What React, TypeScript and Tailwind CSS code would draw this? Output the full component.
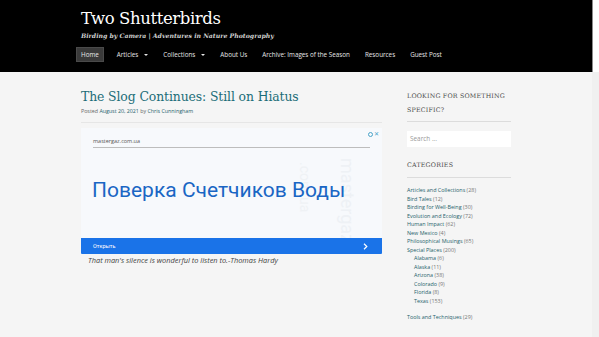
import React from "react";

const serif = { fontFamily: '"DejaVu Serif", "Liberation Serif", serif' };

const navItems: { label: string; caret?: boolean; active?: boolean }[] = [
  { label: "Home", active: true },
  { label: "Articles", caret: true },
  { label: "Collections", caret: true },
  { label: "About Us" },
  { label: "Archive: Images of the Season" },
  { label: "Resources" },
  { label: "Guest Post" },
];

const cats: { name: string; count: number; sub?: boolean; gap?: boolean }[] = [
  { name: "Articles and Collections", count: 28 },
  { name: "Bird Tales", count: 12 },
  { name: "Birding for Well-Being", count: 30 },
  { name: "Evolution and Ecology", count: 72 },
  { name: "Human Impact", count: 62 },
  { name: "New Mexico", count: 4 },
  { name: "Philosophical Musings", count: 65 },
  { name: "Special Places", count: 200 },
  { name: "Alabama", count: 6, sub: true },
  { name: "Alaska", count: 11, sub: true },
  { name: "Arizona", count: 38, sub: true },
  { name: "Colorado", count: 9, sub: true },
  { name: "Florida", count: 8, sub: true },
  { name: "Texas", count: 153, sub: true },
  { name: "Tools and Techniques", count: 29, gap: true },
];

export default function App() {
  return (
    <div
      className="flex h-[337px] w-[599px] overflow-hidden bg-[#f5f5f5]"
      style={{ fontFamily: '"Open Sans", "Liberation Sans", sans-serif' }}
    >
      <div className="flex w-[592px] flex-col">
        {/* Header */}
        <header className="flex h-[72px] flex-col bg-black pl-[81px]">
          <div className="mt-[9px] text-[16.5px] leading-[20px] tracking-[-0.4px] text-white" style={serif}>
            Two Shutterbirds
          </div>
          <div className="mt-[3px] text-[6.2px] font-bold italic leading-[8px] text-[#cfcfcf]" style={serif}>
            Birding by Camera | Adventures in Nature Photography
          </div>
          <nav className="ml-[-5px] mt-[7px] flex items-center gap-[11px] text-[6.3px] text-[#e6e6e6]">
            {navItems.map((n) => (
              <div
                key={n.label}
                className={
                  n.active
                    ? "flex h-[15px] items-center border border-[#4a4a4a] bg-[#3a3a3a] px-[4px]"
                    : "flex h-[15px] items-center px-[2px]"
                }
              >
                <span>{n.label}</span>
                {n.caret && (
                  <span className="ml-[6px] inline-block h-0 w-0 border-x-[2px] border-t-[2.5px] border-x-transparent border-t-[#e6e6e6]" />
                )}
              </div>
            ))}
          </nav>
        </header>

        {/* Body */}
        <div className="flex pl-[81px] pt-[17px]">
          {/* Main column */}
          <main className="flex w-[301px] flex-col">
            <h1 className="text-[12.4px] leading-[16px] tracking-[-0.1px] text-[#1b6d78]" style={serif}>
              The Slog Continues: Still on Hiatus
            </h1>
            <div className="mt-[2px] text-[5.3px] leading-[8px] text-[#666]">
              Posted <span className="text-[#1f5f6b]">August 20, 2021</span> by{" "}
              <span className="text-[#1f5f6b]">Chris Cunningham</span>
            </div>
            <div className="mt-[7px] h-px w-full bg-[#e6e6e6]" />
            {/* Ad */}
            <div className="relative mt-[5px] flex h-[126px] flex-col overflow-hidden bg-[#f7f9fc]">
              <div
                className="pointer-events-none absolute right-[26px] top-[30px] text-[18px] leading-none text-[#eef1f5]"
                style={{ writingMode: "vertical-rl", fontFamily: "Roboto, sans-serif" }}
              >
                mastergaz
              </div>
              <div
                className="pointer-events-none absolute right-[70px] top-[34px] text-[14px] leading-none text-[#eff2f5]"
                style={{ writingMode: "vertical-rl", fontFamily: "Roboto, sans-serif" }}
              >
                .com.ua
              </div>
              <div className="absolute right-[3px] top-[3px] flex items-center gap-[1px] text-[6px] leading-none text-[#4aa3c8]">
                <span className="inline-block h-[5px] w-[5px] rounded-full border border-[#4aa3c8]" />
                <span>✕</span>
              </div>
              <div className="pl-[12px] pt-[9px] text-[5.5px] leading-[8px] text-[#555]">
                mastergaz.com.ua
              </div>
              <div className="mx-[12px] mt-[2px] h-px bg-[#bdbdbd]" />
              <div
                className="relative flex flex-1 items-center pl-[11px] pb-[4px] text-[21px] text-[#1a66c4]"
                style={{ fontFamily: "Roboto, sans-serif" }}
              >
                Поверка Счетчиков Воды
              </div>
              <div className="relative flex h-[16px] items-center justify-between rounded-b-[1px] bg-[#1a73e8] pl-[12px] pr-[14px] text-[5.5px] text-white">
                <span style={{ fontFamily: "Roboto, sans-serif" }}>Открыть</span>
                <svg width="5" height="7" viewBox="0 0 5 7">
                  <path d="M1 0.8 L3.8 3.5 L1 6.2" stroke="white" strokeWidth="1.2" fill="none" />
                </svg>
              </div>
            </div>
            <div className="mt-[1px] pl-[7px] text-[7.4px] italic leading-[11px] text-[#444]">
              That man&apos;s silence is wonderful to listen to.-Thomas Hardy
            </div>
          </main>

          {/* Sidebar */}
          <aside className="ml-[25px] flex w-[104px] flex-col">
            <div className="text-[6.3px] uppercase leading-[14px] tracking-[0.2px] text-[#4a4a4a]" style={serif}>
              Looking for something specific?
            </div>
            <div className="mt-[4px] h-px w-full bg-[#dcdcdc]" />
            <div className="mt-[9px] flex h-[16px] items-center bg-white pl-[3px] text-[6.4px] text-[#999]">
              Search ...
            </div>
            <div className="mt-[13px] text-[6.3px] uppercase leading-[10px] tracking-[0.2px] text-[#4a4a4a]" style={serif}>
              Categories
            </div>
            <div className="mt-[7px] h-px w-full bg-[#dcdcdc]" />
            <ul className="mt-[8px] flex flex-col text-[5.4px] leading-[8.5px]">
              {cats.map((c) => (
                <li
                  key={c.name}
                  className={(c.sub ? "pl-[7px] " : "") + (c.gap ? "mt-[8px]" : "")}
                >
                  <span className="text-[#1f5f6b]">{c.name}</span>{" "}
                  <span className="text-[#777]">({c.count})</span>
                </li>
              ))}
            </ul>
          </aside>
        </div>
      </div>
      {/* right edge strip */}
      <div className="flex w-[7px] flex-col">
        <div className="h-[72px] w-full border-l border-[#8a8a8a] bg-white" />
        <div className="flex-1 bg-[#f0f0f0]" />
      </div>
    </div>
  );
}
